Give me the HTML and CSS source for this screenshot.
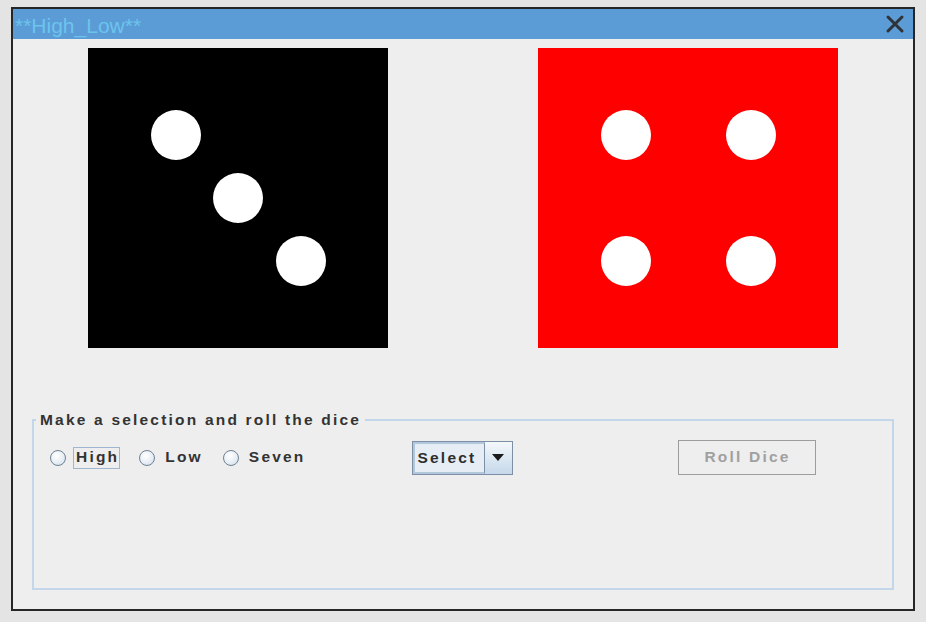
FILE: index.html
```html
<!DOCTYPE html>
<html>
<head>
<meta charset="utf-8">
<link rel="stylesheet" href="styles.css">
</head>
<body>
<div class="window">
  <div class="titlebar">
    <span class="title">**High_Low**</span>
    <svg class="close" width="20" height="20" viewBox="0 0 20 20">
      <path d="M3 3 L17 17 M17 3 L3 17" stroke="#2f3338" stroke-width="3" stroke-linecap="round"/>
    </svg>
  </div>
  <div class="content">
    <div class="dice">
      <svg class="die die-black" width="300" height="300" viewBox="0 0 300 300">
        <rect width="300" height="300" fill="#000"/>
        <circle cx="88" cy="87" r="25" fill="#fff"/>
        <circle cx="150" cy="150" r="25" fill="#fff"/>
        <circle cx="213" cy="213" r="25" fill="#fff"/>
      </svg>
      <svg class="die die-red" width="300" height="300" viewBox="0 0 300 300">
        <rect width="300" height="300" fill="#ff0000"/>
        <circle cx="88" cy="87" r="25" fill="#fff"/>
        <circle cx="213" cy="87" r="25" fill="#fff"/>
        <circle cx="88" cy="213" r="25" fill="#fff"/>
        <circle cx="213" cy="213" r="25" fill="#fff"/>
      </svg>
    </div>
    <fieldset class="group">
      <legend class="group-title">Make a selection and roll the dice</legend>
      <div class="controls">
        <div class="radios">
          <label class="radio"><span class="circle"></span><span class="rlabel focused">High</span></label>
          <label class="radio"><span class="circle"></span><span class="rlabel">Low</span></label>
          <label class="radio"><span class="circle"></span><span class="rlabel">Seven</span></label>
        </div>
        <div class="combo">
          <span class="combo-text">Select</span>
          <span class="combo-arrow"><svg width="12" height="7" viewBox="0 0 12 7"><path d="M0 0 H12 L6 7 Z" fill="#1a1a1a"/></svg></span>
        </div>
        <button class="roll" disabled>Roll Dice</button>
      </div>
    </fieldset>
  </div>
</div>
</body>
</html>
```
FILE: styles.css
```css
html, body {
  margin: 0;
  padding: 0;
}
body {
  background: #e4e4e4;
  width: 926px;
  height: 622px;
  overflow: hidden;
  font-family: "Liberation Sans", Arial, sans-serif;
}
.window {
  margin: 7px 0 0 11px;
  width: 900px;
  border: 2px solid #262626;
  background: #eeeeee;
}
.titlebar {
  height: 30px;
  background: #5b9bd6;
  display: flex;
  align-items: center;
  justify-content: space-between;
  padding: 0 8px 0 2px;
}
.title {
  font-size: 21px;
  color: #6cc4ec;
  line-height: 30px;
  position: relative;
  top: 2px;
}
.close {
  display: block;
}
.content {
  height: 570px;
  box-sizing: border-box;
  padding-top: 9px;
}
.dice {
  display: flex;
  gap: 150px;
  padding-left: 75px;
}
.die {
  display: block;
}
.group {
  margin: 63px 0 0 19px;
  width: 862px;
  box-sizing: border-box;
  height: 179px;
  border: 2px solid #c3d6ea;
  padding: 11px 0 0 0;
}
.group-title {
  margin-left: 2px;
  padding: 0 4px;
  font-size: 15.5px;
  line-height: 18px;
  font-weight: bold;
  letter-spacing: 2.2px;
  color: #333333;
}
.controls {
  display: flex;
  align-items: center;
  height: 35px;
  padding-left: 16px;
}
.radios {
  display: flex;
  align-items: center;
  gap: 19px;
}
.radio {
  display: flex;
  align-items: center;
  gap: 7px;
}
.circle {
  width: 14px;
  height: 14px;
  border-radius: 50%;
  border: 1px solid #6f8294;
  background: radial-gradient(circle at 40% 35%, #ffffff 0%, #e8eef5 55%, #c4d6e8 100%);
}
.rlabel {
  font-size: 15.5px;
  font-weight: bold;
  letter-spacing: 2.2px;
  color: #333333;
  padding: 0 0 2px 2px;
  border: 1px solid transparent;
  line-height: 18px;
}
.rlabel.focused {
  border-color: #9eb6d0;
}
.combo {
  margin-left: 105px;
  display: flex;
  height: 34px;
  width: 101px;
  box-sizing: border-box;
  border: 1px solid #7c8fa5;
}
.combo-text {
  width: 72px;
  box-sizing: border-box;
  border: 2px solid #b2c6dc;
  border-right: 1px solid #7c8fa5;
  background: #e6edf5;
  font-size: 15.5px;
  font-weight: bold;
  letter-spacing: 2.2px;
  color: #2e2e2e;
  line-height: 27px;
  padding-left: 3px;
}
.combo-arrow {
  flex: 1;
  display: flex;
  align-items: center;
  justify-content: center;
  background: linear-gradient(#f4f8fb, #c5d8eb);
}
.combo-arrow svg {
  display: block;
}
.roll {
  margin-left: 165px;
  width: 138px;
  height: 35px;
  box-sizing: border-box;
  border: 1px solid #9c9c9c;
  background: #eeeeee;
  font-family: "Liberation Sans", Arial, sans-serif;
  font-size: 15.5px;
  font-weight: bold;
  letter-spacing: 2.2px;
  color: #a0a0a0;
  padding: 0 0 2px 2px;
}
```
